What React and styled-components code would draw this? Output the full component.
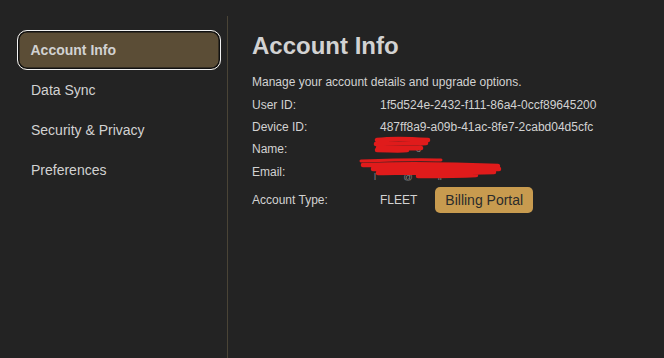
import React from "react"
import styled, { createGlobalStyle } from "styled-components"

const colors = {
  bg: "#232323",
  text: "#d2d2d2",
  divider: "#4a4436",
  active: "#5b4d36",
  gold: "#c89b4f",
  red: "#e01b1b",
}

const Global = createGlobalStyle`
  html, body { margin: 0; padding: 0; background: ${colors.bg}; }
  body { font-family: "Liberation Sans", Arial, sans-serif; color: ${colors.text}; }
`

const Layout = styled.div`
  display: flex;
  width: 664px;
  height: 358px;
  background: ${colors.bg};
  overflow: hidden;
`

const Sidebar = styled.nav`
  width: 227px;
  box-sizing: border-box;
  padding: 30px 6px 0 17px;
  display: flex;
  flex-direction: column;
`

const NavItem = styled.div`
  height: 40px;
  box-sizing: border-box;
  display: flex;
  align-items: center;
  padding-left: ${p => (p.$active ? "12.5px" : "14px")};
  font-size: 14px;
  color: ${colors.text};
  border-radius: 10px;
  font-weight: ${p => (p.$active ? "bold" : "normal")};
  ${p =>
    p.$active &&
    `
    background: ${colors.active};
    border: 1.5px solid #f2f2f2;
    box-shadow: inset 0 0 0 1.5px #111;
  `}
`

const Divider = styled.div`
  width: 1px;
  margin-top: 16px;
  background: ${colors.divider};
`

const Main = styled.main`
  flex: 1;
  padding: 32px 0 0 24px;
  font-size: 12px;
`

const Title = styled.h1`
  margin: 0 0 11px;
  font-size: 24px;
  font-weight: bold;
  line-height: 28px;
  color: ${colors.text};
`

const Intro = styled.p`
  margin: 0;
  line-height: 22.4px;
`

const Row = styled.div`
  display: flex;
  align-items: center;
  min-height: 22.4px;
  margin-top: ${p => (p.$spaced ? "4px" : "0")};
`

const Label = styled.div`
  width: 128px;
`

const Value = styled.div`
  position: relative;
  display: flex;
  align-items: center;
  gap: 18px;
`

const Faint = styled.span`
  color: #8a8a8a;
  font-size: 9px;
`

const Scribble = styled.svg`
  position: absolute;
  pointer-events: none;
`

const Button = styled.button`
  background: ${colors.gold};
  color: #2b2b2b;
  border: none;
  border-radius: 5px;
  height: 26px;
  padding: 0 10px;
  font-family: "Liberation Sans", Arial, sans-serif;
  font-size: 14px;
`

const navItems = ["Account Info", "Data Sync", "Security & Privacy", "Preferences"]

export default function App() {
  return (
    <Layout>
      <Global />
      <Sidebar>
        {navItems.map((n, i) => (
          <NavItem key={n} $active={i === 0}>{n}</NavItem>
        ))}
      </Sidebar>
      <Divider />
      <Main>
        <Title>Account Info</Title>
        <Intro>Manage your account details and upgrade options.</Intro>
        <Row><Label>User ID:</Label><Value>1f5d524e-2432-f111-86a4-0ccf89645200</Value></Row>
        <Row><Label>Device ID:</Label><Value>487ff8a9-a09b-41ac-8fe7-2cabd04d5cfc</Value></Row>
        <Row>
          <Label>Name:</Label>
          <Value>
            <Faint style={{ marginLeft: 4 }}>lan&nbsp;&nbsp;&nbsp;&nbsp;&nbsp;&nbsp;&nbsp;&nbsp;o</Faint>
            <Scribble width="60" height="18" style={{ left: -7, top: -8 }} viewBox="0 0 60 18">
              <path d="M4 4 C20 2 40 3 55 4 M3 8 C20 7 40 8 53 7 M5 12 C20 11 35 13 48 12 M4 14 C16 14 26 15 34 14" stroke={colors.red} strokeWidth="4.5" fill="none" strokeLinecap="round" />
            </Scribble>
          </Value>
        </Row>
        <Row>
          <Label>Email:</Label>
          <Value>
            <Faint style={{ marginLeft: -6, marginTop: 11 }}>l&nbsp;&nbsp;&nbsp;&nbsp;&nbsp;&nbsp;&nbsp;&nbsp;&nbsp;&nbsp;&nbsp;@&nbsp;&nbsp;&nbsp;&nbsp;&nbsp;&nbsp;&nbsp;&nbsp;&nbsp;&nbsp;ll</Faint>
            <Scribble width="150" height="24" style={{ left: -22, top: -4 }} viewBox="0 0 150 24">
              <path d="M3 4 C30 3 60 2 83 3" stroke={colors.red} strokeWidth="3" fill="none" strokeLinecap="round" />
              <path d="M5 8 C40 7 90 7 140 9 M15 12 C50 11 100 11 141 12 M20 16 C60 15 100 16 136 15 M60 19 C80 19 100 19 118 18" stroke={colors.red} strokeWidth="4.5" fill="none" strokeLinecap="round" />
            </Scribble>
          </Value>
        </Row>
        <Row $spaced>
          <Label>Account Type:</Label>
          <Value>
            FLEET
            <Button>Billing Portal</Button>
          </Value>
        </Row>
      </Main>
    </Layout>
  )
}
